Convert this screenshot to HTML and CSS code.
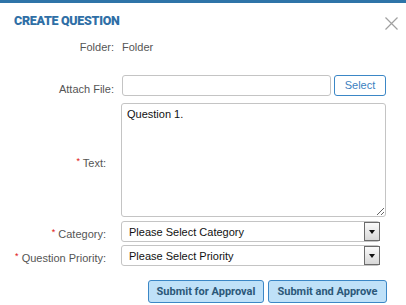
FILE: index.html
```html
<!DOCTYPE html>
<html lang="en">
<head>
  <meta charset="UTF-8" />
  <meta name="viewport" content="width=device-width, initial-scale=1.0" />
  <title>Create Question</title>
  <link rel="stylesheet" href="styles.css">
</head>
<body>
  <div class="dialog">
    <div class="header">
      <h2>CREATE QUESTION</h2>
      <span class="close">
        <svg width="13" height="13" viewBox="0 0 13 13"><path d="M0.5 0.5L12.5 12.5M12.5 0.5L0.5 12.5" stroke="#a0a0a0" stroke-width="1.2" fill="none"/></svg>
      </span>
    </div>
    <div class="form">
      <div class="label folder-label">Folder:</div>
      <div class="value folder-value">Folder</div>

      <div class="label attach-label">Attach File:</div>
      <div class="attach">
        <input type="text" class="file-input" />
        <button class="select-btn">Select</button>
      </div>

      <div class="label text-label"><span class="req">*</span> Text:</div>
      <textarea class="text-area">Question 1.</textarea>

      <div class="label"><span class="req">*</span> Category:</div>
      <div class="dropdown">
        <span>Please Select Category</span>
        <span class="arrow"></span>
      </div>

      <div class="label"><span class="req">*</span> Question Priority:</div>
      <div class="dropdown">
        <span>Please Select Priority</span>
        <span class="arrow"></span>
      </div>
    </div>
    <div class="actions">
      <button class="submit">Submit for Approval</button>
      <button class="submit">Submit and Approve</button>
    </div>
  </div>
</body>
</html>
```

FILE: styles.css
```css
body {
  margin: 0;
  font-family: "Liberation Sans", Arial, sans-serif;
  background: #ffffff;
}
.dialog {
  border-top: 3px solid #2e74a8;
  height: 302px;
  overflow: hidden;
}
.header {
  display: flex;
  justify-content: space-between;
  align-items: center;
  padding: 9px 8px 0 14px;
  height: 17px;
}
h2 {
  margin: 0;
  font-family: Roboto, sans-serif;
  font-weight: 900;
  font-size: 12.5px;
  color: #2f6fa6;
  letter-spacing: -0.3px;
}
.close {
  display: flex;
  margin-top: 5px;
}
.form {
  display: grid;
  grid-template-columns: 114px 265px;
  column-gap: 7px;
  align-items: center;
  margin-top: 12px;
  font-size: 11px;
}
.label {
  text-align: right;
  color: #555555;
  padding-right: 8px;
}
.folder-label, .attach-label {
  padding-right: 0;
}
.value {
  color: #555555;
  padding-left: 1px;
}
.folder-label, .folder-value {
  margin-bottom: 22px;
}
.req {
  color: #e01010;
  font-size: 9px;
  vertical-align: 3px;
}
.attach {
  display: flex;
  gap: 3px;
  margin-bottom: 7px;
}
.file-input {
  width: 209px;
  height: 21px;
  box-sizing: border-box;
  border: 1px solid #c4c4c4;
  border-radius: 3px;
  margin: 0 0 0 1px;
}
.select-btn {
  width: 52px;
  height: 21px;
  background: #ffffff;
  border: 1px solid #3b87c6;
  border-radius: 3px;
  color: #3b7fbf;
  font-family: "Liberation Sans", Arial, sans-serif;
  font-size: 11px;
  padding: 0 0 2px 0;
}
.text-area {
  display: block;
  width: 265px;
  height: 114px;
  box-sizing: border-box;
  border: 1px solid #c4c4c4;
  border-radius: 3px;
  font-family: "Liberation Sans", Arial, sans-serif;
  font-size: 11px;
  color: #111;
  padding: 4px 5px;
  margin: 0 0 4px 0;
  resize: vertical;
}
.dropdown {
  display: flex;
  justify-content: space-between;
  align-items: center;
  width: 259px;
  height: 21px;
  box-sizing: border-box;
  border: 1px solid #c4c4c4;
  border-radius: 3px;
  padding-left: 7px;
  color: #111;
  margin-bottom: 3px;
}
.arrow {
  position: relative;
  width: 16px;
  height: 19px;
  box-sizing: border-box;
  border: 1px solid #6b6b6b;
  background: linear-gradient(#fafafa, #d8d8d8);
  margin-right: -1px;
}
.arrow::after {
  content: "";
  position: absolute;
  left: 4px;
  top: 7px;
  border-left: 3.5px solid transparent;
  border-right: 3.5px solid transparent;
  border-top: 4px solid #111;
}
.actions {
  display: flex;
  gap: 4px;
  margin: 11px 0 0 148px;
}
.submit {
  height: 23px;
  padding: 0 7px 1px 7px;
  background: #bfe1f8;
  border: 1px solid #3b87c6;
  border-radius: 3px;
  color: #2c5878;
  font-family: Roboto, sans-serif;
  font-weight: 700;
  font-size: 11px;
}
.submit:first-child {
  width: 116px;
}
.submit:last-child {
  width: 119px;
}
```
